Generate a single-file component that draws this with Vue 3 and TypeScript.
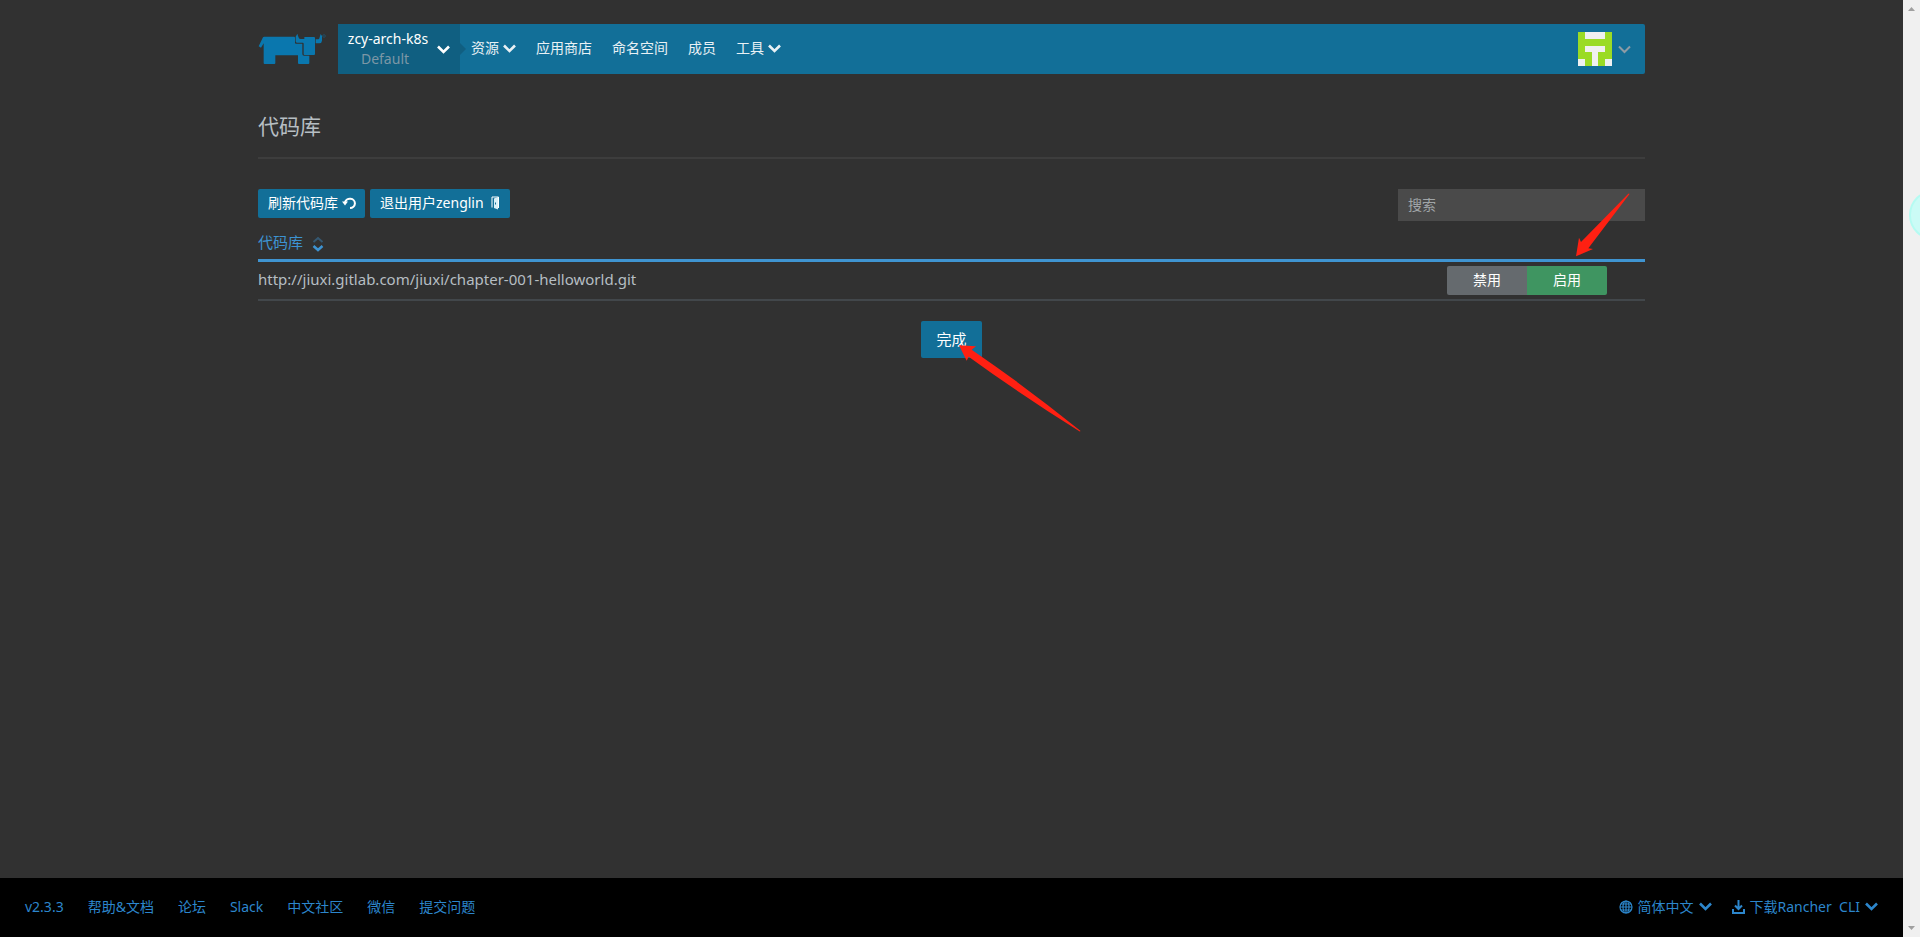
<script setup lang="ts">
import { ref } from 'vue'

interface NavItem {
  label: string
  menu: boolean
}

const navItems: NavItem[] = [
  { label: '资源', menu: true },
  { label: '应用商店', menu: false },
  { label: '命名空间', menu: false },
  { label: '成员', menu: false },
  { label: '工具', menu: true },
]

const footerLinks: string[] = ['v2.3.3', '帮助&文档', '论坛', 'Slack', '中文社区', '微信', '提交问题']

const repositories: string[] = ['http://jiuxi.gitlab.com/jiuxi/chapter-001-helloworld.git']

const search = ref('')
</script>

<template>
  <div class="window">
    <div class="page">
      <header class="header">
        <a class="logo" href="#" aria-label="Rancher">
          <svg width="70" height="34" viewBox="24 54 210 102" fill="#0a77ae">
            <path d="M26 97 L39 70 Q40 68 43 68 H132 Q135 68 135 71 V86 Q135 89 138 89 H157 V120 Q157 125 162 125 H178 V147 Q178 150 175 150 H147 Q144 150 144 147 V124 H76 V147 Q76 150 73 150 H44 Q41 150 41 147 V88 L33 101 Z" />
            <path d="M137 68 L142 59 L145 68 Q146 75 152 75 H163 V69 H192 Q195 69 195 72 V120 Q195 123 192 123 H164 Q161 123 161 120 V89 Q161 86 158 86 H141 Q137 86 137 82 Z" />
            <path d="M197 76 H205 Q208 76 209 70 L212 60 L216 66 V80 Q215 88 208 88 H197 Z" />
            <circle cx="222" cy="66" r="4" fill="none" stroke="#0a77ae" stroke-opacity=".55" stroke-width="2" />
          </svg>
        </a>
        <nav class="nav">
          <button class="project" type="button">
            <span class="project-names">
              <span>zcy-arch-k8s</span>
              <span class="project-sub">Default</span>
            </span>
            <svg class="chevron" width="13" height="9" viewBox="0 0 13 9"><path d="M1 1.5 L6.5 7 L12 1.5" /></svg>
          </button>
          <a v-for="item in navItems" :key="item.label" class="nav-item" href="#">
            {{ item.label }}
            <svg v-if="item.menu" class="chevron" width="13" height="9" viewBox="0 0 13 9"><path d="M1 1.5 L6.5 7 L12 1.5" /></svg>
          </a>
          <button class="user" type="button" aria-label="zenglin">
            <svg width="34" height="34" viewBox="0 0 5 5" shape-rendering="crispEdges">
              <rect width="5" height="5" fill="#9bdb25" />
              <path fill="#f0f0f0" d="M1 0h3v1H1zM1 2h3v1H3v2H2V3H1zM0 4h1v1H0zM4 4h1v1H4z" />
            </svg>
            <svg class="chevron thin" width="13" height="9" viewBox="0 0 13 9"><path d="M1 1.5 L6.5 7 L12 1.5" /></svg>
          </button>
        </nav>
      </header>

      <main class="content">
        <h1 class="title">代码库</h1>

        <div class="toolbar">
          <button class="btn" type="button">
            刷新代码库
            <svg width="14" height="12" viewBox="0 0 14 12" fill="none" stroke="#fff" stroke-width="2">
              <path d="M3 5.5 A5 4.6 0 1 1 8 11" />
              <path d="M0 4.5 H6 L3 8.5 Z" fill="#fff" stroke="none" />
            </svg>
          </button>
          <button class="btn logout" type="button">
            退出用户zenglin
            <svg width="8" height="14" viewBox="0 0 8 14">
              <path d="M1 11.5 V1 H7.5 V12" fill="none" stroke="#fff" />
              <path d="M3 2.5 L7 1 V13.5 L3 12 Z" fill="#d9f0f8" />
              <path d="M4 6.5 h1 v2 h-1z" fill="#136f98" />
            </svg>
          </button>
          <input v-model="search" class="search" type="search" placeholder="搜索" aria-label="搜索" />
        </div>

        <table class="table">
          <thead>
            <tr>
              <th scope="col">
                <button class="sort" type="button">
                  代码库
                  <svg width="12" height="16" viewBox="0 0 12 16" fill="none" stroke="#3d93d2">
                    <path d="M1.5 6 L6 2 L10.5 6" stroke-opacity=".4" stroke-width="2" />
                    <path d="M1.5 10 L6 14 L10.5 10" stroke-width="2.5" />
                  </svg>
                </button>
              </th>
              <th aria-label="操作"></th>
            </tr>
          </thead>
          <tbody>
            <tr v-for="repo in repositories" :key="repo">
              <td>{{ repo }}</td>
              <td class="actions">
                <div class="toggle">
                  <button class="off" type="button">禁用</button>
                  <button class="on" type="button">启用</button>
                  <svg class="pointer-enable" width="54" height="64" viewBox="0 0 162 192">
                    <path fill="#ff2012" d="M0 190 L9 134 L15 147 L157 2 Q161 0 160 4 L37 166 L51 168 Z" />
                  </svg>
                </div>
              </td>
            </tr>
          </tbody>
        </table>

        <div class="finish">
          <button class="btn done" type="button">完成</button>
          <svg class="pointer-done" width="122" height="87" viewBox="0 0 366 261">
            <path fill="#ff2012" d="M0 1 L51 4 L38 14 Q200 125 364 257 Q365 260 361 259 Q180 145 29 35 L23 47 Z" />
          </svg>
        </div>
      </main>

      <footer class="footer">
        <a v-for="link in footerLinks" :key="link" href="#">{{ link }}</a>
        <button class="language" type="button">
          <svg width="14" height="14" viewBox="0 0 14 14" fill="none" stroke="#2c86cc" stroke-width="1.2">
            <circle cx="7" cy="7" r="6" />
            <ellipse cx="7" cy="7" rx="3" ry="6" />
            <path d="M7 1v12M1 7h12M2 4h10M2 10h10" />
          </svg>
          简体中文
          <svg class="chevron" width="13" height="9" viewBox="0 0 13 9"><path d="M1 1.5 L6.5 7 L12 1.5" /></svg>
        </button>
        <button type="button">
          <svg width="13" height="14" viewBox="0 0 13 14" fill="none" stroke="#2c86cc" stroke-width="2">
            <path d="M6.5 0 V8 M3 5.5 L6.5 9 L10 5.5 M1 9 V13 H12 V9" />
          </svg>
          <span>下载Rancher&nbsp; CLI</span>
          <svg class="chevron" width="13" height="9" viewBox="0 0 13 9"><path d="M1 1.5 L6.5 7 L12 1.5" /></svg>
        </button>
      </footer>
    </div>

    <div class="scrollbar" aria-hidden="true">
      <svg width="7" height="4" viewBox="0 0 7 4"><path d="M0 4 L3.5 0 L7 4 Z" fill="#a0a0a0" /></svg>
      <span class="bubble"></span>
      <svg width="7" height="4" viewBox="0 0 7 4"><path d="M0 0 L3.5 4 L7 0 Z" fill="#a0a0a0" /></svg>
    </div>
  </div>
</template>

<style>
body {
  margin: 0;
  background: #313131;
}
</style>

<style scoped>
.window {
  display: flex;
  min-height: 100vh;
  font-family: "Noto Sans", "Noto Sans CJK SC", sans-serif;
  font-size: 14px;
  line-height: 20px;
  color: #b6bec3;
}

.window * {
  box-sizing: border-box;
}

button,
input {
  margin: 0;
  padding: 0;
  border: 0;
  background: none;
  color: inherit;
  font: inherit;
}

a {
  color: inherit;
  text-decoration: none;
}

svg {
  flex: none;
}

.page {
  flex: 1;
  display: flex;
  flex-direction: column;
  min-width: 0;
  background: #313131;
}

.header,
.content {
  width: 100%;
  max-width: 1387px;
  margin: 0 auto;
}

.header {
  display: flex;
  margin-top: 24px;
}

.logo {
  display: flex;
  align-items: center;
  width: 80px;
}

.nav {
  flex: 1;
  display: flex;
  align-items: center;
  gap: 20px;
  height: 50px;
  border-radius: 2px;
  background: #126f98;
  color: #e9f1f5;
}

.chevron {
  fill: none;
  stroke: currentColor;
  stroke-width: 2.6;
}

.thin {
  stroke-width: 2;
  color: #8d9ba5;
}

.project {
  position: relative;
  display: flex;
  align-items: center;
  gap: 8px;
  height: 50px;
  width: 122px;
  margin-right: -9px;
  padding-left: 9px;
  background: #105f81;
  color: #fff;
}

.project::after {
  content: "";
  position: absolute;
  left: 100%;
  top: 19px;
  border: 6px solid transparent;
  border-right-width: 0;
  border-left-color: #105f81;
}

.project-names {
  display: flex;
  flex-direction: column;
  align-items: center;
  width: 82px;
  padding-bottom: 1px;
}

.project-sub {
  padding-right: 6px;
  color: #7c97a6;
}

.nav-item {
  display: flex;
  align-items: center;
  gap: 4px;
  padding-bottom: 2px;
}

.user {
  display: flex;
  align-items: center;
  gap: 6px;
  margin-left: auto;
  margin-right: 14px;
}

.content {
  flex: 1;
}

.title {
  margin: 39px 0 30px;
  padding-bottom: 18px;
  border-bottom: 2px solid #3d3d3d;
  font-size: 21px;
  font-weight: 400;
  line-height: 26px;
}

.toolbar {
  display: flex;
  align-items: flex-start;
  gap: 5px;
  height: 32px;
}

.btn {
  display: flex;
  align-items: center;
  gap: 4px;
  height: 29px;
  padding: 0 9px 1px 10px;
  border-radius: 2px;
  background: #126f98;
  color: #fff;
}

.logout {
  gap: 7px;
  padding-right: 11px;
}

.search {
  width: 247px;
  height: 32px;
  margin-left: auto;
  padding: 0 10px 2px;
  border-radius: 0;
  background: #4a4a4a;
}

.search::placeholder {
  color: #a0a5a8;
  opacity: 1;
}

.table {
  width: 100%;
  border-collapse: separate;
  border-spacing: 0;
  font-size: 15px;
}

.table th {
  height: 41px;
  padding: 4px 0 0;
  border-bottom: 3px solid #3f94d1;
  text-align: left;
  font-weight: 400;
}

.sort {
  display: flex;
  align-items: center;
  gap: 9px;
  color: #3d93d2;
}

.sort svg {
  margin-top: 4px;
}

.table td {
  height: 39px;
  padding: 0 0 3px;
  border-bottom: 2px solid #42474b;
}

.table .actions {
  width: 198px;
  padding: 0;
}

.toggle {
  position: relative;
  display: flex;
  width: 160px;
  color: #fff;
  font-size: 14px;
}

.toggle button {
  flex: 1;
  height: 29px;
  padding-bottom: 2px;
}

.off {
  border-radius: 2px 0 0 2px;
  background: #656a6e;
}

.on {
  border-radius: 0 2px 2px 0;
  background: #3f9561;
}

.pointer-enable {
  position: absolute;
  right: -23px;
  top: -73px;
}

.finish {
  position: relative;
  width: 61px;
  margin: 20px auto 0;
}

.done {
  justify-content: center;
  width: 100%;
  height: 37px;
  padding: 0 0 2px;
  font-size: 15px;
}

.pointer-done {
  position: absolute;
  left: 38px;
  top: 24px;
}

.footer {
  display: flex;
  align-items: center;
  gap: 25px;
  height: 59px;
  padding: 0 25px 2px;
  background: #000;
  color: #2c86cc;
}

.footer a + a {
  margin-left: -1px;
}

.footer button {
  display: flex;
  align-items: center;
  gap: 5px;
}

.footer .language {
  margin-left: auto;
  margin-right: -5px;
}

.scrollbar {
  position: relative;
  display: flex;
  flex-direction: column;
  align-items: center;
  justify-content: space-between;
  width: 17px;
  padding: 7px 0;
  overflow: hidden;
  background: #f0f0f0;
}

.bubble {
  position: absolute;
  left: 6px;
  top: 190px;
  width: 50px;
  height: 50px;
  border: 2px solid #b5fbf2;
  border-radius: 50%;
  background: #cbfbf6;
}
</style>
